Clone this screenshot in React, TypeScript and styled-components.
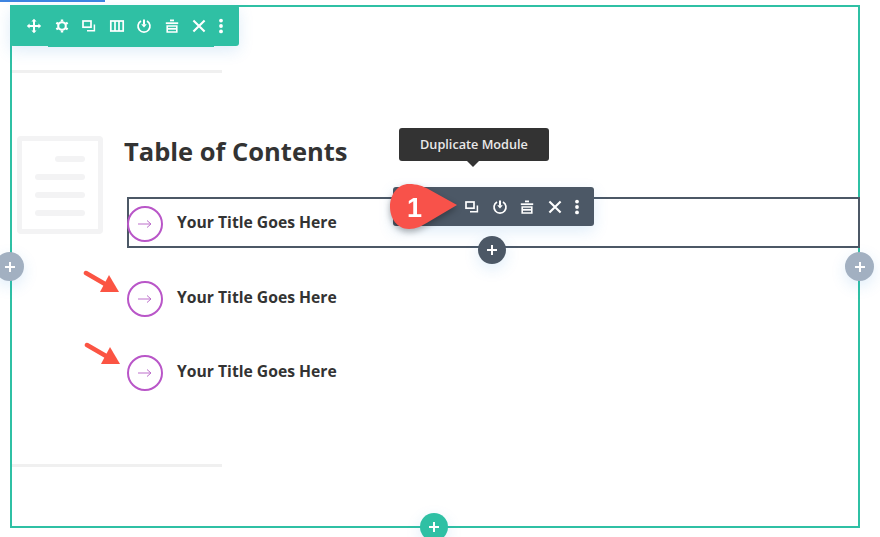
import React from "react";
import styled, { createGlobalStyle } from "styled-components";

const GlobalStyle = createGlobalStyle`
	html, body {
		margin: 0;
		padding: 0;
		background: #fff;
		font-family: "Open Sans", "Liberation Sans", sans-serif;
	}
	body {
		width: 880px;
		height: 537px;
		overflow: hidden;
	}
`;

type IconName = "move" | "gear" | "copy" | "columns" | "power" | "trash" | "close" | "dots";

const Icon = ({ name }: { name: IconName }) => {
	const common = { width: 16, height: 16, viewBox: "0 0 16 16", fill: "none", stroke: "#fff", strokeWidth: 2 };
	switch (name) {
		case "move":
			return (
				<svg {...common}>
					<path d="M8 2v12M2 8h12" strokeWidth={2} />
					<path d="M8 .8 10.6 3.6H5.4zM8 15.2 10.6 12.4H5.4zM.8 8 3.6 5.4v5.2zM15.2 8 12.4 5.4v5.2z" fill="#fff" stroke="none" />
				</svg>
			);
		case "gear":
			return (
				<svg {...common}>
					<circle cx="8" cy="8" r="3.8" strokeWidth={2.1} />
					<path d="M8 1.4v2.2M8 12.4v2.2M2.3 4.7l1.9 1.1M11.8 10.2l1.9 1.1M2.3 11.3l1.9-1.1M11.8 5.8l1.9-1.1" strokeWidth={2.4} />
				</svg>
			);
		case "copy":
			return (
				<svg {...common}>
					<rect x="2" y="3" width="8" height="6.2" strokeWidth={1.7} />
					<path d="M13.4 6.6v6.2H6" strokeWidth={1.5} />
				</svg>
			);
		case "columns":
			return (
				<svg {...common}>
					<rect x="1.8" y="3" width="12.4" height="10" strokeWidth={1.7} />
					<path d="M6 3v10M10 3v10" strokeWidth={1.7} />
				</svg>
			);
		case "power":
			return (
				<svg {...common}>
					<path d="M5 3a6 6 0 1 0 6 0" strokeWidth={1.7} />
					<path d="M8 1.4v5" strokeWidth={2} />
					<path d="M5.2 6.2h5.6L8 9.6z" fill="#fff" stroke="none" />
				</svg>
			);
		case "trash":
			return (
				<svg {...common}>
					<path d="M1.8 5.2h12.4" strokeWidth={1.8} />
					<path d="M6 2.4h4" strokeWidth={1.8} />
					<path d="M3.2 8h9.6v6H3.2z" strokeWidth={1.6} />
					<path d="M3.2 10.8h9.6" strokeWidth={1.8} />
				</svg>
			);
		case "close":
			return (
				<svg {...common}>
					<path d="M2.4 2.4l11.2 11.2M13.6 2.4 2.4 13.6" strokeWidth={2.1} />
				</svg>
			);
		case "dots":
			return (
				<svg {...common} stroke="none" fill="#fff">
					<circle cx="8" cy="2.6" r="1.9" />
					<circle cx="8" cy="8" r="1.9" />
					<circle cx="8" cy="13.4" r="1.9" />
				</svg>
			);
	}
};

const TopLine = styled.div`
	position: absolute;
	left: 0;
	top: 0;
	width: 105px;
	height: 2px;
	background: #3d84e0;
`;

const Section = styled.section`
	position: relative;
	box-sizing: border-box;
	width: 850px;
	height: 523px;
	margin: 5px 0 0 10px;
	border: 2px solid #2fc0a4;
	padding-top: 63px;
`;

const Divider = styled.div`
	width: 210px;
	height: 3px;
	background: #f0f0f0;
`;

const Blurb = styled.div`
	display: flex;
	align-items: flex-start;
	margin-top: 63px;
	padding-left: 5px;
`;

const DocIcon = styled.div`
	box-sizing: border-box;
	flex: none;
	width: 86px;
	height: 98px;
	border: 5px solid #f3f3f4;
	border-radius: 4px;
	padding: 15px 13px 0 13px;
	display: flex;
	flex-direction: column;
	align-items: flex-end;
	gap: 12px;
`;

const DocLine = styled.span<{ $short?: boolean }>`
	display: block;
	width: ${(p) => (p.$short ? "30px" : "100%")};
	height: 6px;
	border-radius: 3px;
	background: #f3f3f4;
`;

const Content = styled.div`
	flex: 1;
	margin-left: 21px;
`;

const Title = styled.h1`
	margin: -1px 0 0;
	height: 62px;
	font-size: 25.5px;
	line-height: 32px;
	font-weight: 700;
	color: #333;
`;

const Row = styled.div<{ $active?: boolean }>`
	box-sizing: border-box;
	display: flex;
	align-items: center;
	height: 51px;
	margin: 0 -2px 24px 3px;
	margin-bottom: ${(p) => (p.$active ? "24px" : "23px")};
	border: 2px solid ${(p) => (p.$active ? "#4c5866" : "transparent")};
`;

const Circle = styled.span`
	box-sizing: border-box;
	flex: none;
	width: 36px;
	height: 36px;
	margin: 3px 0 0 -2px;
	border: 2px solid #b956c8;
	border-radius: 50%;
	display: flex;
	align-items: center;
	justify-content: center;
`;

const RowText = styled.span`
	margin: -2px 0 0 14px;
	font-size: 15.7px;
	font-weight: 700;
	color: #333;
`;

const BottomDivider = styled(Divider)`
	margin-top: 44px;
`;

const Toolbar = styled.div<{ $bg: string }>`
	position: absolute;
	box-sizing: border-box;
	display: flex;
	align-items: center;
	gap: 11.5px;
	background: ${(p) => p.$bg};
	border-radius: 3px;
	box-shadow: 0 5px 15px rgba(43, 135, 218, 0.15);
	& > svg:last-child {
		margin-left: -5.5px;
	}
`;

const SectionBar = styled(Toolbar)`
	left: 10px;
	top: 5px;
	width: 229px;
	height: 41px;
	padding-left: 16px;
	&::after {
		content: "";
		position: absolute;
		left: 38px;
		right: 25px;
		bottom: -1px;
		height: 1px;
		background: ${(p) => p.$bg};
	}
`;

const ModuleBar = styled(Toolbar)`
	left: 393px;
	top: 187px;
	width: 201px;
	height: 39px;
	padding-left: 71px;
`;

const Tooltip = styled.div`
	position: absolute;
	left: 399px;
	top: 128px;
	width: 150px;
	height: 33px;
	border-radius: 3px;
	background: #333;
	color: #e9e9e9;
	font-size: 12.7px;
	font-weight: 600;
	line-height: 33px;
	text-align: center;
	&::after {
		content: "";
		position: absolute;
		left: 68px;
		top: 33px;
		border: 6px solid transparent;
		border-top-color: #333;
		border-bottom-width: 0;
	}
`;

const Plus = styled.button<{ $bg: string; $x: number; $y: number; $size: number }>`
	position: absolute;
	left: ${(p) => p.$x}px;
	top: ${(p) => p.$y}px;
	width: ${(p) => p.$size}px;
	height: ${(p) => p.$size}px;
	padding: 0;
	border: none;
	border-radius: 50%;
	background: ${(p) => p.$bg};
	box-shadow: 0 5px 15px rgba(43, 135, 218, 0.15);
	display: flex;
	align-items: center;
	justify-content: center;
`;

const Overlay = styled.svg<{ $x: number; $y: number }>`
	position: absolute;
	left: ${(p) => p.$x}px;
	top: ${(p) => p.$y}px;
`;

const CalloutShape = styled(Overlay)`
	filter: drop-shadow(0 3px 3px rgba(0, 0, 0, 0.3));
`;

const PlusGlyph = () => (
	<svg width="12" height="12" viewBox="0 0 12 12">
		<path d="M6 1v10M1 6h10" stroke="#fff" strokeWidth="2" />
	</svg>
);

const Arrow = () => (
	<svg width="18" height="10" viewBox="0 0 18 10" fill="none" stroke="#bd6fcb" strokeWidth="1">
		<path d="M2 5h13M11 1.5 15 5l-4 3.5" />
	</svg>
);

const RedArrow = ({ x, y }: { x: number; y: number }) => (
	<Overlay $x={x} $y={y} width="42" height="26" viewBox="0 0 42 26">
		<path d="M6 3 25 14" stroke="#fb5443" strokeWidth="4.5" strokeLinecap="round" />
		<path d="M29 5 39 22 20 22z" fill="#fb5443" />
	</Overlay>
);

const Callout = () => (
	<CalloutShape $x={386} $y={180} width="80" height="58" viewBox="0 0 80 58">
		<path
			d="M23 4C31 4 37 6 44 10L71 25 44 41C36 46 30 49 23 49 11 49 4 38 4 27 4 14 12 4 23 4Z"
			fill="#f8524a"
		/>
		<text
			x="28.5"
			y="37"
			fontFamily="Liberation Sans, sans-serif"
			fontSize="27"
			fontWeight="700"
			fill="#fff"
			textAnchor="middle"
		>
			1
		</text>
	</CalloutShape>
);

const sectionIcons: IconName[] = ["move", "gear", "copy", "columns", "power", "trash", "close", "dots"];
const moduleIcons: IconName[] = ["copy", "power", "trash", "close", "dots"];

const App = () => {
	return (
		<>
			<GlobalStyle />
			<TopLine />
			<Section>
				<Divider />
				<Blurb>
					<DocIcon>
						<DocLine $short />
						<DocLine />
						<DocLine />
						<DocLine />
					</DocIcon>
					<Content>
						<Title>Table of Contents</Title>
						<Row $active>
							<Circle>
								<Arrow />
							</Circle>
							<RowText>Your Title Goes Here</RowText>
						</Row>
						<Row>
							<Circle>
								<Arrow />
							</Circle>
							<RowText>Your Title Goes Here</RowText>
						</Row>
						<Row>
							<Circle>
								<Arrow />
							</Circle>
							<RowText>Your Title Goes Here</RowText>
						</Row>
					</Content>
				</Blurb>
				<BottomDivider />
			</Section>

			<SectionBar $bg="#2fc0a4">
				{sectionIcons.map((name) => (
					<Icon key={name} name={name} />
				))}
			</SectionBar>

			<Tooltip>Duplicate Module</Tooltip>
			<ModuleBar $bg="#4c5866">
				{moduleIcons.map((name) => (
					<Icon key={name} name={name} />
				))}
			</ModuleBar>
			<Callout />

			<RedArrow x={80} y={270} />
			<RedArrow x={81} y={342} />

			<Plus $bg="#4c5866" $x={478} $y={236} $size={28}>
				<PlusGlyph />
			</Plus>
			<Plus $bg="#a2b0c1" $x={-5} $y={252} $size={29}>
				<PlusGlyph />
			</Plus>
			<Plus $bg="#a2b0c1" $x={845} $y={252} $size={29}>
				<PlusGlyph />
			</Plus>
			<Plus $bg="#2fc0a4" $x={420} $y={513} $size={28}>
				<PlusGlyph />
			</Plus>
		</>
	);
};

export default App;
